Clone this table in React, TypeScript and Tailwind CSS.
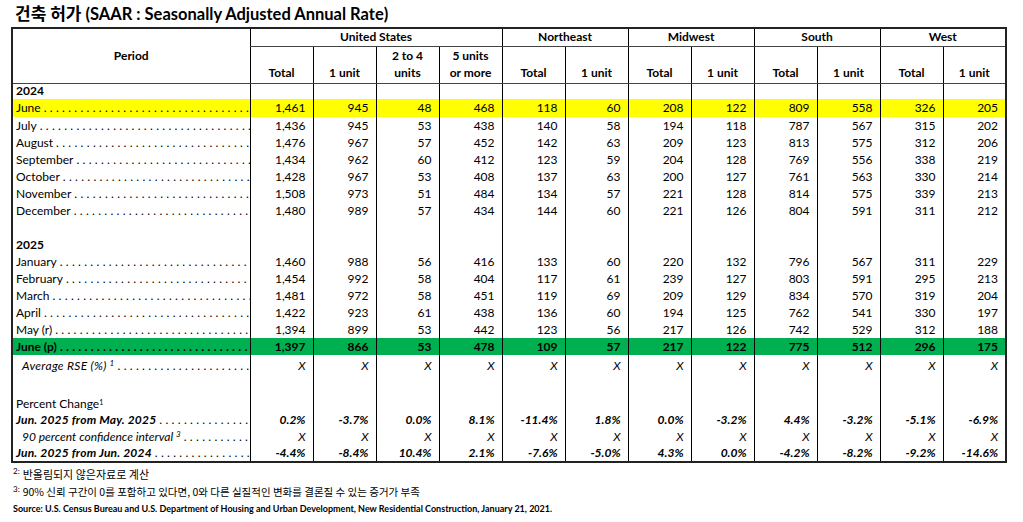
import type { ReactNode } from 'react'

const DOTS = '.'.repeat(90)

type RowProps = {
  label: ReactNode
  vals?: string[]
  h: string
  bg?: string
  labelCls?: string
  valCls?: string
  dots?: boolean
  align?: string
}

function Row({ label, vals, h, bg = '', labelCls = '', valCls = '', dots = true, align = 'align-middle' }: RowProps) {
  const cells = vals ?? Array(12).fill('')
  return (
    <tr className={`${h} ${bg}`}>
      <td className={`p-0 pl-[3px] ${align}`}>
        <div className="flex items-baseline whitespace-nowrap">
          <span className={labelCls}>{label}</span>
          {dots && (
            <span className="flex-1 overflow-hidden whitespace-nowrap tracking-[3.3px] pl-[3px]">{DOTS}</span>
          )}
        </div>
      </td>
      {cells.map((v, i) => (
        <td key={i} className={`p-0 pr-[7px] text-right border-l border-black ${align} ${valCls}`}>
          {v}
        </td>
      ))}
    </tr>
  )
}

const y2024: [string, string[]][] = [
  ['July', ['1,436', '945', '53', '438', '140', '58', '194', '118', '787', '567', '315', '202']],
  ['August', ['1,476', '967', '57', '452', '142', '63', '209', '123', '813', '575', '312', '206']],
  ['September', ['1,434', '962', '60', '412', '123', '59', '204', '128', '769', '556', '338', '219']],
  ['October', ['1,428', '967', '53', '408', '137', '63', '200', '127', '761', '563', '330', '214']],
  ['November', ['1,508', '973', '51', '484', '134', '57', '221', '128', '814', '575', '339', '213']],
  ['December', ['1,480', '989', '57', '434', '144', '60', '221', '126', '804', '591', '311', '212']],
]

const y2025: [string, string[]][] = [
  ['January', ['1,460', '988', '56', '416', '133', '60', '220', '132', '796', '567', '311', '229']],
  ['February', ['1,454', '992', '58', '404', '117', '61', '239', '127', '803', '591', '295', '213']],
  ['March', ['1,481', '972', '58', '451', '119', '69', '209', '129', '834', '570', '319', '204']],
  ['April', ['1,422', '923', '61', '438', '136', '60', '194', '125', '762', '541', '330', '197']],
  ['May (r)', ['1,394', '899', '53', '442', '123', '56', '217', '126', '742', '529', '312', '188']],
]

const xs = Array(12).fill('X')

export default function App() {
  return (
    <div className="w-[1023px] h-[522px] bg-white text-black font-['Lato','Noto_Sans_CJK_KR',sans-serif] pl-[11px]">
      <h1 className="h-[27px] pt-[3px] pl-[4px] text-[16.5px] font-bold leading-[20px]">
        <span className="font-['Noto_Sans_CJK_KR',sans-serif] text-[17px] font-bold">건축 허가</span> (SAAR : Seasonally Adjusted Annual Rate)
      </h1>

      <table className="w-[996px] table-fixed border-collapse border-2 border-[#222] text-[12px] leading-[14px]">
        <colgroup>
          <col className="w-[238px]" />
          {Array.from({ length: 12 }).map((_, i) => (
            <col key={i} className="w-[63px]" />
          ))}
        </colgroup>
        <thead className="font-bold">
          <tr className="h-[18px]">
            <th rowSpan={2} className="p-0 align-middle text-center border-b border-[#444] font-bold">
              Period
            </th>
            <th colSpan={4} className="p-0 text-center border-l border-b border-black border-b-[#444]">United States</th>
            <th colSpan={2} className="p-0 text-center border-l border-b border-black border-b-[#444]">Northeast</th>
            <th colSpan={2} className="p-0 text-center border-l border-b border-black border-b-[#444]">Midwest</th>
            <th colSpan={2} className="p-0 text-center border-l border-b border-black border-b-[#444]">South</th>
            <th colSpan={2} className="p-0 text-center border-l border-b border-black border-b-[#444]">West</th>
          </tr>
          <tr className="h-[37px]">
            {['Total', '1 unit', '2 to 4 units', '5 units or more', 'Total', '1 unit', 'Total', '1 unit', 'Total', '1 unit', 'Total', '1 unit'].map((t, i) => (
              <th key={i} className="p-0 pb-[2px] align-bottom text-center border-l border-b border-black border-b-[#444] leading-[17px]">
                {t === '2 to 4 units' ? (
                  <>2 to 4<br />units</>
                ) : t === '5 units or more' ? (
                  <>5 units<br />or more</>
                ) : (
                  t
                )}
              </th>
            ))}
          </tr>
        </thead>
        <tbody>
          <Row label="2024" h="h-[16px]" labelCls="font-bold" dots={false} />
          <Row
            label="June"
            h="h-[18px]"
            bg="bg-[#ffff00]"
            vals={['1,461', '945', '48', '468', '118', '60', '208', '122', '809', '558', '326', '205']}
          />
          {y2024.map(([l, v]) => (
            <Row key={l} label={l} vals={v} h="h-[17px]" />
          ))}
          <Row label="" h="h-[17px]" dots={false} />
          <Row label="2025" h="h-[17px]" labelCls="font-bold" dots={false} />
          {y2025.map(([l, v]) => (
            <Row key={l} label={l} vals={v} h="h-[17px]" />
          ))}
          <Row
            label="June (p)"
            h="h-[17px]"
            bg="bg-[#00b050] font-bold"
            labelCls="font-bold"
            vals={['1,397', '866', '53', '478', '109', '57', '217', '122', '775', '512', '296', '175']}
          />
          <Row
            label={
              <span className="pl-[6px] italic tracking-[0.3px]">
                Average RSE (%)<sup className="text-[8px] pl-[3px]">1</sup>
              </span>
            }
            vals={xs}
            valCls="italic"
            h="h-[22px]"
          />
          <Row label="" h="h-[16px]" dots={false} />
          <Row
            label={
              <span>
                Percent Change<sup className="text-[7px]">1</sup>
              </span>
            }
            h="h-[18px]"
            dots={false}
            align="align-bottom"
          />
          <Row
            label="Jun. 2025 from May. 2025"
            labelCls="font-bold italic tracking-[0.2px]"
            valCls="font-bold italic"
            h="h-[17px]"
            vals={['0.2%', '-3.7%', '0.0%', '8.1%', '-11.4%', '1.8%', '0.0%', '-3.2%', '4.4%', '-3.2%', '-5.1%', '-6.9%']}
          />
          <Row
            label={
              <span className="pl-[6px] italic">
                90 percent confidence interval<sup className="text-[8px] pl-[3px]">3</sup>
              </span>
            }
            valCls="italic"
            h="h-[17px]"
            vals={xs}
          />
          <Row
            label="Jun. 2025 from Jun. 2024"
            labelCls="font-bold italic tracking-[0.2px]"
            valCls="font-bold italic"
            h="h-[17px]"
            vals={['-4.4%', '-8.4%', '10.4%', '2.1%', '-7.6%', '-5.0%', '4.3%', '0.0%', '-4.2%', '-8.2%', '-9.2%', '-14.6%']}
          />
        </tbody>
      </table>

      <div className="pl-[2px] pt-[3px] text-[11px] leading-[16px]">
        <p className="flex items-start gap-[3px]">
          <span className="text-[8px] leading-[10px]">2:</span>
          <span className="font-['Noto_Sans_CJK_KR',sans-serif]">반올림되지 않은자료로 계산</span>
        </p>
        <p className="flex items-start gap-[3px] mt-[2px]">
          <span className="text-[8px] leading-[10px]">3:</span>
          <span className="font-['Noto_Sans_CJK_KR',sans-serif] text-[10.5px]">
            90% 신뢰 구간이 0를 포함하고 있다면, 0와 다른 실질적인 변화를 결론질 수 있는 증거가 부족
          </span>
        </p>
        <p className="mt-[3px] text-[9px] font-bold leading-[12px]">
          Source: U.S. Census Bureau and U.S. Department of Housing and Urban Development, New Residential Construction, January 21, 2021.
        </p>
      </div>
    </div>
  )
}
